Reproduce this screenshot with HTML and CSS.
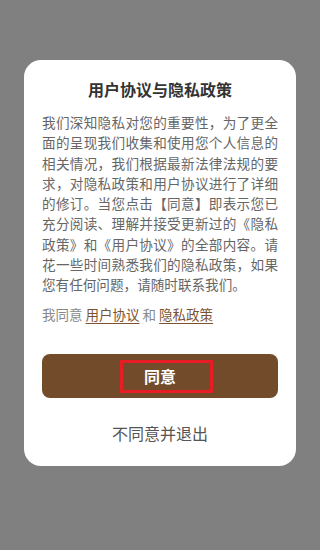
FILE: index.html
```html
<!DOCTYPE html>
<html lang="zh-CN">
<head>
  <meta charset="UTF-8">
  <meta name="viewport" content="width=device-width, initial-scale=1.0">
  <title>用户协议与隐私政策</title>
  <link rel="stylesheet" href="styles.css">
</head>
<body>
  <div class="dialog">
    <h1 class="dialog-title">用户协议与隐私政策</h1>
    <p class="dialog-text">我们深知隐私对您的重要性，为了更全面的呈现我们收集和使用您个人信息的相关情况，我们根据最新法律法规的要求，对隐私政策和用户协议进行了详细的修订。当您点击【同意】即表示您已充分阅读、理解并接受更新过的《隐私政策》和《用户协议》的全部内容。请花一些时间熟悉我们的隐私政策，如果您有任何问题，请随时联系我们。</p>
    <p class="agree-line">我同意 <a href="#" class="link">用户协议</a> 和 <a href="#" class="link">隐私政策</a></p>
    <button class="btn-agree">同意<span class="highlight"></span></button>
    <button class="btn-quit">不同意并退出</button>
  </div>
</body>
</html>
```

FILE: styles.css
```css
html, body {
  margin: 0;
  padding: 0;
  background: #808080;
  height: 100%;
}
body {
  font-family: "Noto Sans CJK SC", "Noto Sans", sans-serif;
  padding-top: 60px;
  box-sizing: border-box;
}
.dialog {
  margin: 0 24px;
  background: #fff;
  border-radius: 17px;
  padding: 18px 18px 22px;
  display: flex;
  flex-direction: column;
}
.dialog-title {
  margin: 0;
  font-size: 16px;
  line-height: 22px;
  font-weight: bold;
  color: #333;
  text-align: center;
}
.dialog-text {
  margin: 12px 0 0;
  font-size: 13.6px;
  line-height: 20.25px;
  color: #666;
  text-align: justify;
}
.agree-line {
  margin: 10px 0 0;
  font-size: 13.5px;
  line-height: 20px;
  color: #888;
}
.link {
  color: #7b5332;
  text-decoration: underline;
  text-underline-offset: 3px;
}
.btn-agree {
  position: relative;
  margin-top: 30px;
  height: 44px;
  border: none;
  border-radius: 8px;
  background: #724c2a;
  color: #fff;
  font-family: inherit;
  font-size: 16px;
  font-weight: bold;
  padding: 0;
}
/* annotation box drawn over the button */
.highlight {
  position: absolute;
  left: 78px;
  top: 6px;
  width: 93px;
  height: 33px;
  box-sizing: border-box;
  border: 3px solid #e81c24;
}
.btn-quit {
  margin-top: 24px;
  border: none;
  background: none;
  padding: 0;
  font-family: inherit;
  font-size: 16px;
  line-height: 22px;
  color: #555;
}
```
